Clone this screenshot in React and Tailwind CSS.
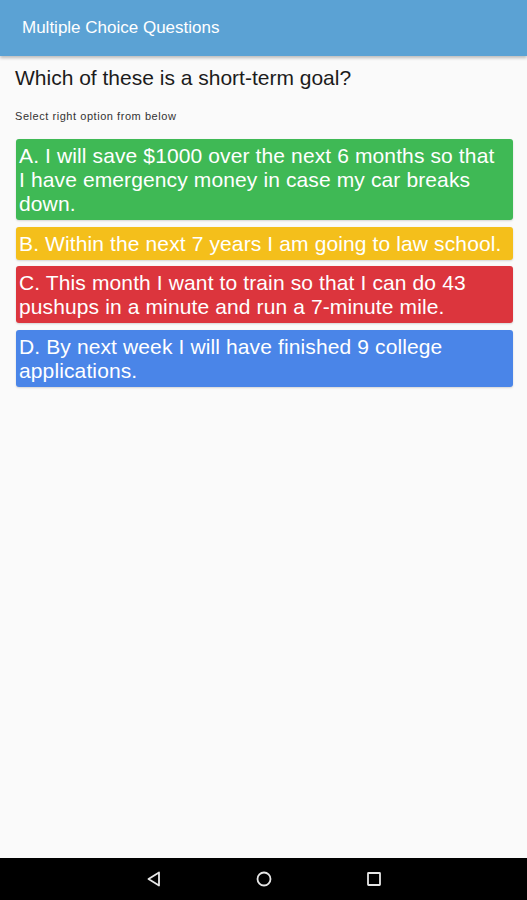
import React from 'react';

const options = [
  { text: 'A. I will save $1000 over the next 6 months so that I have emergency money in case my car breaks down.', color: 'bg-[#3fb955]' },
  { text: 'B. Within the next 7 years I am going to law school.', color: 'bg-[#f4bf1b]' },
  { text: 'C. This month I want to train so that I can do 43 pushups in a minute and run a 7-minute mile.', color: 'bg-[#dc353d]' },
  { text: 'D. By next week I will have finished 9 college applications.', color: 'bg-[#4a85e8]' },
];

export default function App() {
  return (
    <div className="w-[527px] h-[900px] flex flex-col bg-[#fafafa] font-['Liberation_Sans',Arial,sans-serif] overflow-hidden">
      <header className="h-[56px] shrink-0 bg-[#5ba2d4] flex items-center px-[22px] shadow-[0_2px_3px_rgba(0,0,0,0.25)] z-10">
        <h1 className="text-white text-[17px]">Multiple Choice Questions</h1>
      </header>

      <main className="flex-1 flex flex-col px-[15px]">
        <h2 className="mt-[9px] text-[21px] leading-[26px] text-[#1c1c1c]">Which of these is a short-term goal?</h2>
        <p className="mt-[19px] text-[11px] leading-[12px] tracking-[0.55px] text-[#333]">Select right option from below</p>

        <div className="mt-[17px] flex flex-col gap-[6.5px] pl-[1px]">
          {options.map((o) => (
            <button
              key={o.text}
              className={`${o.color} w-[497px] rounded-[3px] text-left text-white text-[21px] leading-[24px] tracking-[0.12px] pl-[3px] pr-[11px] pt-[5px] pb-[4px] shadow-[0_1px_2px_rgba(0,0,0,0.15)]`}
            >
              {o.text}
            </button>
          ))}
        </div>
      </main>

      <nav className="h-[42px] shrink-0 bg-black flex items-center justify-center">
        <div className="flex items-center gap-[92px] text-[#e6e6e6]">
          <svg width="18" height="18" viewBox="0 0 18 18" fill="none" stroke="currentColor" strokeWidth="1.8" strokeLinejoin="round">
            <path d="M14 2.5 L3.5 9 L14 15.5 Z" />
          </svg>
          <svg width="18" height="18" viewBox="0 0 18 18" fill="none" stroke="currentColor" strokeWidth="1.8">
            <circle cx="9" cy="9" r="6.5" />
          </svg>
          <svg width="18" height="18" viewBox="0 0 18 18" fill="none" stroke="currentColor" strokeWidth="1.8">
            <rect x="3" y="3" width="12" height="12" rx="0.5" />
          </svg>
        </div>
      </nav>
    </div>
  );
}
